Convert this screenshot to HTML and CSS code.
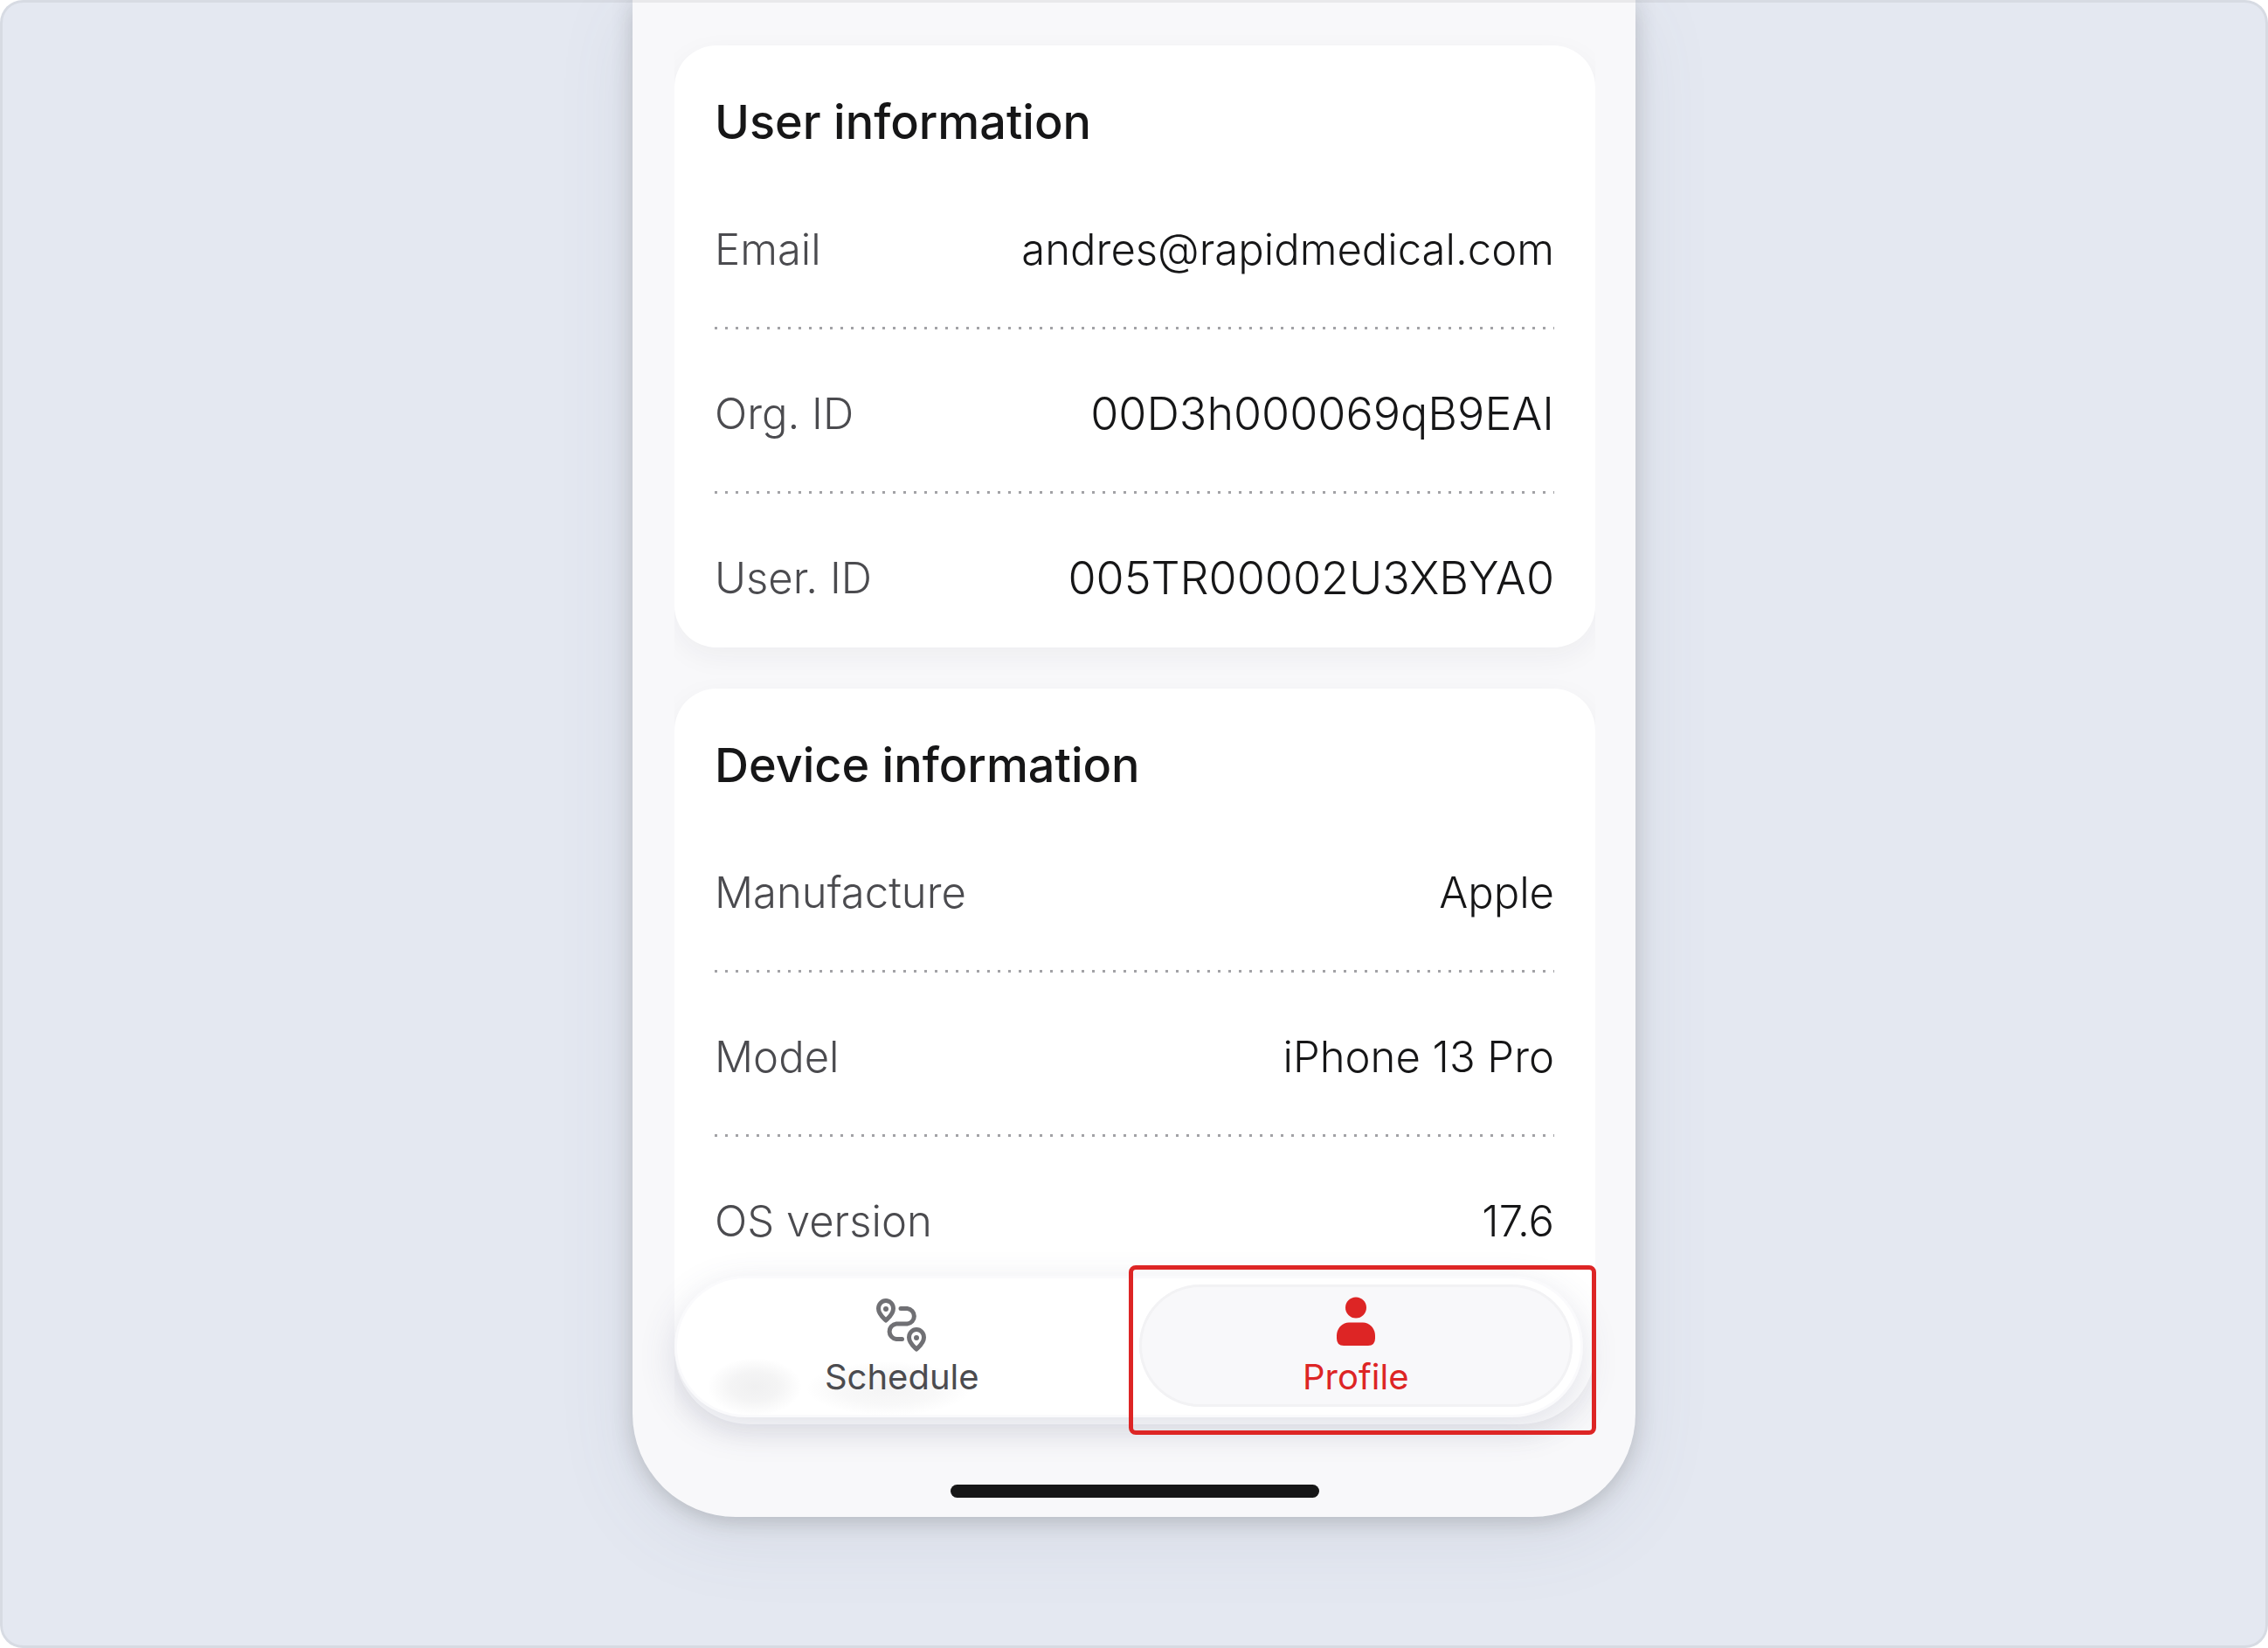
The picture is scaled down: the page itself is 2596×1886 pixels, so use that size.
FILE: index.html
```html
<!DOCTYPE html>
<html lang="en">
<head>
<meta charset="utf-8">
<meta name="viewport" content="width=device-width, initial-scale=1">
<title>Profile</title>
<link rel="stylesheet" href="styles.css">
</head>
<body>
<div class="stage">
  <div class="phone">
    <main class="content">
      <section class="card">
        <h2 class="card-title">User information</h2>
        <dl class="rows">
          <div class="row"><dt>Email</dt><dd>andres@rapidmedical.com</dd></div>
          <div class="row"><dt>Org. ID</dt><dd class="code">00D3h000069qB9EAI</dd></div>
          <div class="row"><dt>User. ID</dt><dd class="code">005TR00002U3XBYA0</dd></div>
        </dl>
      </section>
      <section class="card card-last">
        <h2 class="card-title">Device information</h2>
        <dl class="rows">
          <div class="row"><dt>Manufacture</dt><dd>Apple</dd></div>
          <div class="row"><dt>Model</dt><dd>iPhone 13 Pro</dd></div>
          <div class="row"><dt>OS version</dt><dd>17.6</dd></div>
        </dl>
      </section>
    </main>
    <footer class="dock">
      <nav class="tabs">
        <a class="tab" href="#schedule">
          <svg class="tab-icon" viewBox="0 0 60 60" fill="none" stroke="#707074" stroke-width="5" stroke-linecap="round" stroke-linejoin="round" aria-hidden="true">
            <path d="M12 27C9 24 3.500 20 3.500 13.500A8.500 9 0 0 1 20.500 13.500C20.500 20 15 24 12 27Z"/>
            <path d="M47 60C44 57 38.500 53 38.500 46.500A8.500 9 0 0 1 55.500 46.500C55.500 53 50 57 47 60Z"/>
            <path d="M29 13.500H36.500A8.800 8.800 0 0 1 36.500 31H24A8.800 8.800 0 0 0 24 48.500H30.500"/>
            <circle cx="12" cy="14" r="3" fill="#707074" stroke="none"/>
            <circle cx="47" cy="47" r="3" fill="#707074" stroke="none"/>
          </svg>
          <span>Schedule</span>
        </a>
        <a class="tab tab-active" href="#profile" aria-current="page">
          <svg class="tab-icon" viewBox="0 0 60 60" fill="#dd2525" aria-hidden="true">
            <circle cx="30" cy="12.500" r="12"/>
            <path d="M22 29.500H38C46 29.500 52 36.500 52 44.500V47.500Q52 56 44 56H16Q8 56 8 47.500V44.500C8 36.500 14 29.500 22 29.500Z"/>
          </svg>
          <span>Profile</span>
        </a>
        <span class="highlight"></span>
      </nav>
      <div class="home-bar"></div>
    </footer>
  </div>
</div>
</body>
</html>
```
FILE: styles.css
```css
* {
  box-sizing: border-box;
}

body {
  margin: 0;
  background: #fff;
  color: #161617;
  font-family: Inter, "Liberation Sans", sans-serif;
}

.stage {
  position: relative;
  display: flex;
  justify-content: center;
  align-items: flex-start;
  min-height: 100vh;
  padding: 0 24px 150px;
  background: #e4e8f1;
  border-radius: 26px;
  overflow: hidden;
}

/* hairline frame drawn over the phone's cut-off top edge */
.stage::after {
  content: "";
  position: absolute;
  inset: 0;
  border: 3px solid rgba(108, 104, 104, 0.1);
  border-radius: 26px;
  pointer-events: none;
}

.phone {
  width: 100%;
  max-width: 1148px;
  padding: 52px 46px 22px 48px;
  background: #f8f8fa;
  border-radius: 0 0 118px 118px;
  box-shadow: 0 5px 24px rgba(50, 50, 50, 0.22), 0 20px 90px rgba(90, 100, 120, 0.1);
}

.content {
  display: flex;
  flex-direction: column;
  gap: 47px;
}

.card {
  padding: 54px 47px 49px 46px;
  background: #fff;
  border-radius: 48px;
  box-shadow: 0 10px 32px rgba(40, 40, 60, 0.05);
  clip-path: inset(-40px 0 -40px 0);
}

.card-last {
  padding-bottom: 202px;
  border-radius: 48px 48px 86px 86px;
}

.card-title {
  margin: 0 0 15px;
  font-size: 54px;
  line-height: 68px;
  font-weight: 500;
}

.rows {
  margin: 0;
}

.row {
  display: flex;
  justify-content: space-between;
  gap: 24px;
  padding-top: 67px;
  font-size: 49px;
  line-height: 60px;
  font-weight: 300;
}

/* dotted rule between rows */
.row:not(:last-child) {
  padding-bottom: 61px;
  background: repeating-linear-gradient(90deg, #a2a2a6 0 3px, transparent 3px 12px) left bottom / 100% 3px no-repeat;
}

.row dt {
  color: #4b4b4f;
}

.row dd {
  margin: 0;
}

.row .code {
  font-size: 52px;
}

.dock {
  position: relative;
  display: flex;
  flex-direction: column;
  gap: 77px;
  margin-top: -170px;
}

.tabs {
  position: relative;
  display: grid;
  grid-template-columns: 1fr 1fr;
  gap: 23px;
  margin-right: 14px;
  padding: 10px 12px 12px;
  border-radius: 81px;
  background:
    radial-gradient(closest-side, rgba(40, 40, 50, 0.07), rgba(40, 40, 50, 0.05) 50%, transparent) 38px 94px / 108px 66px no-repeat,
    radial-gradient(closest-side, rgba(40, 40, 50, 0.05), rgba(40, 40, 50, 0.03) 60%, transparent) 150px 98px / 190px 62px no-repeat,
    #fff;
  box-shadow:
    inset 0 0 0 3px #fafafc,
    0 12px 40px rgba(70, 75, 120, 0.17);
}

.tab {
  display: flex;
  flex-direction: column;
  align-items: center;
  height: 140px;
  padding-top: 14px;
  border-radius: 70px;
  color: #4b4b4f;
  font-size: 40px;
  line-height: 48px;
  font-weight: 400;
  text-decoration: none;
}

.tab-icon {
  width: 60px;
  height: 60px;
  margin-bottom: 8px;
  overflow: visible;
}

.tab-active {
  background: #f8f8fa;
  box-shadow: inset 0 0 0 3px #f2f2f4;
  color: #dd2525;
}

.highlight {
  position: absolute;
  inset: -12px -15px -20px 50%;
  border: 5px solid #dd2525;
  border-radius: 8px;
  pointer-events: none;
}

.home-bar {
  align-self: center;
  width: 40%;
  height: 15px;
  border-radius: 8px;
  background: #161617;
}
```
